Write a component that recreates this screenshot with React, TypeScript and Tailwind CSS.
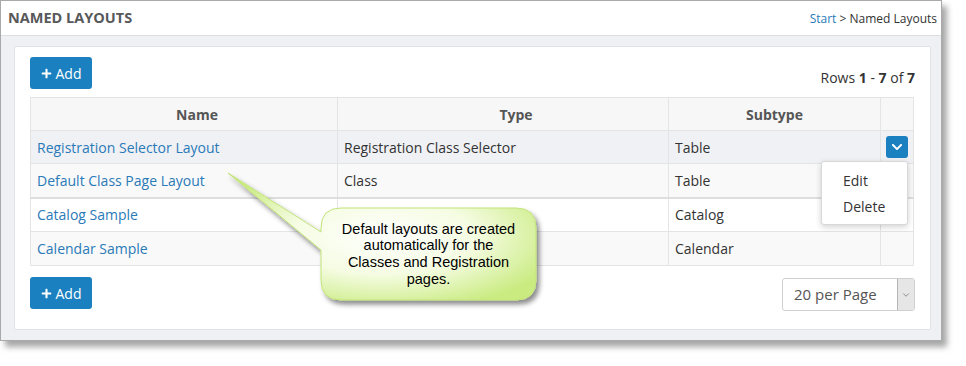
import { FaPlus, FaChevronDown } from "react-icons/fa";
import { ChevronDown } from "lucide-react";

const rows = [
  { name: "Registration Selector Layout", type: "Registration Class Selector", subtype: "Table", bg: "bg-[#f0f1f5]", h: "h-[33px]" },
  { name: "Default Class Page Layout", type: "Class", subtype: "Table", bg: "bg-[#f9f9f9]", h: "h-[34px]" },
  { name: "Catalog Sample", type: "", subtype: "Catalog", bg: "bg-white", h: "h-[34px]" },
  { name: "Calendar Sample", type: "", subtype: "Calendar", bg: "bg-[#f9f9f9]", h: "h-[34px]" },
];

function AddButton() {
  return (
    <button className="h-[32px] w-[62px] rounded-[3px] bg-[#1b80bf] text-white text-[14px] flex items-center justify-center gap-[4px]">
      <FaPlus size={11} />
      <span>Add</span>
    </button>
  );
}

function Callout() {
  return (
    <div className="absolute left-[220px] top-[160px] w-[330px] h-[150px] pointer-events-none">
      <svg width="330" height="150" className="absolute left-0 top-0">
        <defs>
          <radialGradient id="cg" cx="50%" cy="50%" r="60%">
            <stop offset="0%" stopColor="#ffffff" />
            <stop offset="50%" stopColor="#f5fce2" />
            <stop offset="100%" stopColor="#c9eb80" />
          </radialGradient>
          <filter id="cs" x="-20%" y="-20%" width="140%" height="150%">
            <feDropShadow dx="3" dy="4" stdDeviation="2.5" floodColor="#000" floodOpacity="0.45" />
          </filter>
        </defs>
        <path
          d="M 121 48 H 296 Q 316 48 316 68 V 120 Q 316 140 296 140 H 121 Q 101 140 101 120 V 90 L 8 13 L 101 72 V 68 Q 101 48 121 48 Z"
          fill="url(#cg)"
          stroke="#c3e47a"
          strokeWidth="1"
          filter="url(#cs)"
        />
      </svg>
      <div className="absolute left-[101px] top-[48px] w-[215px] h-[92px] flex items-center justify-center text-center font-['Liberation_Sans',Arial,sans-serif] text-[14.5px] leading-[16.7px] text-black">
        <p>
          Default layouts are created
          <br />
          automatically for the
          <br />
          Classes and Registration
          <br />
          pages.
        </p>
      </div>
    </div>
  );
}

export default function App() {
  return (
    <div className="relative w-[966px] h-[366px] bg-white font-['Open_Sans',sans-serif]">
      <div className="w-[942px] h-[341px] border border-[#a9a9a9] bg-[#eff0f4] shadow-[5px_6px_6px_rgba(0,0,0,0.35)] flex flex-col">
        {/* header */}
        <div className="h-[35px] shrink-0 bg-white border-b border-[#dcdee3] flex items-center justify-between pl-[7px] pr-[4px]">
          <h1 className="text-[14.5px] font-bold text-[#58595b]">NAMED LAYOUTS</h1>
          <div className="text-[12px] text-[#333] pt-[1px]">
            <span className="text-[#2a7ab8]">Start</span> &gt; Named Layouts
          </div>
        </div>

        {/* body */}
        <div className="pl-[13px] pr-[10px] pt-[10px]">
          <div className="h-[284px] bg-white border border-[#e2e3e7] rounded-[2px] px-[15px] pt-[10px]">
            <div className="flex items-end justify-between">
              <AddButton />
              <div className="text-[14px] text-[#333] pb-[1px]">
                Rows <b>1</b> - <b>7</b> of <b>7</b>
              </div>
            </div>

            <table className="mt-[8px] w-[883px] border-collapse text-[14px] table-fixed">
              <colgroup>
                <col className="w-[307px]" />
                <col className="w-[331px]" />
                <col className="w-[212px]" />
                <col className="w-[33px]" />
              </colgroup>
              <thead>
                <tr className="h-[33px] bg-[#f7f7f7]">
                  <th className="border border-[#e4e4e4] pl-[26px] font-bold text-[#555]">Name</th>
                  <th className="border border-[#e4e4e4] pl-[26px] font-bold text-[#555]">Type</th>
                  <th className="border border-[#e4e4e4] font-bold text-[#555]">Subtype</th>
                  <th className="border border-[#e4e4e4]"></th>
                </tr>
              </thead>
              <tbody>
                {rows.map((r, i) => (
                  <tr key={r.name} className={`${r.h} ${r.bg} ${i === 2 ? "border-t-2 border-t-[#dedede]" : ""}`}>
                    <td className="border border-[#e4e4e4] px-[6px] text-[#2a7ab8]">{r.name}</td>
                    <td className="border border-[#e4e4e4] px-[6px] text-[#333]">{r.type}</td>
                    <td className="border border-[#e4e4e4] px-[6px] text-[#333]">{r.subtype}</td>
                    <td className="border border-[#e4e4e4] relative">
                      {i === 0 && (
                        <div className="ml-[5px] w-[22px] h-[22px] rounded-[3px] bg-[#1b80bf] flex items-center justify-center text-white">
                          <FaChevronDown size={12} />
                        </div>
                      )}
                    </td>
                  </tr>
                ))}
              </tbody>
            </table>

            <div className="mt-[11px] flex items-start justify-between">
              <AddButton />
              <div className="mt-[1px] w-[133px] h-[33px] border border-[#cfcfcf] rounded-[3px] flex overflow-hidden">
                <div className="flex-1 flex items-center pl-[11px] text-[15px] text-[#555]">20 per Page</div>
                <div className="w-[17px] bg-[#e6e6e6] border-l border-[#b5b5b5] flex items-center justify-center text-[#555]">
                  <ChevronDown size={10} strokeWidth={1.5} />
                </div>
              </div>
            </div>
          </div>
        </div>
      </div>

      {/* dropdown menu */}
      <div className="absolute left-[821px] top-[161px] w-[87px] h-[64px] bg-white border border-[#d8d8d8] rounded-[3px] shadow-[0_2px_6px_rgba(0,0,0,0.18)] flex flex-col justify-center gap-[7px] pl-[21px] text-[14px] text-[#333]">
        <div className="leading-[19px]">Edit</div>
        <div className="leading-[19px]">Delete</div>
      </div>

      <Callout />
    </div>
  );
}
